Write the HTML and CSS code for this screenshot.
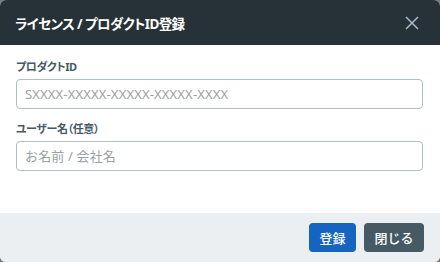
FILE: index.html
```html
<!DOCTYPE html>
<html lang="ja">
<head>
<meta charset="utf-8">
<link rel="stylesheet" href="styles.css">
</head>
<body>
<div class="dialog">
  <div class="header">
    <div class="title">ライセンス / プロダクトID登録</div>
    <button class="close" aria-label="閉じる">
      <svg width="14" height="14" viewBox="0 0 14 14"><path d="M1 1L13 13M13 1L1 13" stroke="#a9bcc8" stroke-width="1.5" fill="none"/></svg>
    </button>
  </div>
  <div class="body">
    <div class="field">
      <label class="label">プロダクトID</label>
      <input class="input" placeholder="SXXXX-XXXXX-XXXXX-XXXXX-XXXX">
    </div>
    <div class="field">
      <label class="label">ユーザー名（任意）</label>
      <input class="input" placeholder="お名前 / 会社名">
    </div>
  </div>
  <div class="footer">
    <button class="btn primary">登録</button>
    <button class="btn secondary">閉じる</button>
  </div>
</div>
</body>
</html>
```

FILE: styles.css
```css
html, body {
  margin: 0;
  padding: 0;
  background: #777a7c;
}
body {
  font-family: "Noto Sans", "Noto Sans CJK JP", sans-serif;
}
.dialog {
  width: 440px;
  height: 262px;
  border-radius: 6px;
  overflow: hidden;
  background: #ffffff;
  display: flex;
  flex-direction: column;
}
.header {
  height: 45px;
  background: #263238;
  display: flex;
  align-items: center;
  justify-content: space-between;
  padding: 0 16px 0 15px;
  box-sizing: border-box;
}
.title {
  color: #ffffff;
  font-size: 13.5px;
  font-weight: 700;
  font-feature-settings: "palt";
  letter-spacing: -0.6px;
}
.close {
  background: none;
  border: 0;
  padding: 0;
  width: 14px;
  height: 14px;
  margin-top: 1px;
  margin-right: 5px;
  display: flex;
}
.body {
  padding: 14px 17px 30px 16px;
  flex: 1;
}
.field {
  display: flex;
  flex-direction: column;
  margin-bottom: 12px;
}
.label {
  font-size: 11px;
  line-height: 16px;
  font-weight: 700;
  color: #455a64;
  margin-bottom: 4px;
  font-feature-settings: "palt";
  letter-spacing: -0.4px;
}
.input {
  height: 30px;
  box-sizing: border-box;
  border: 1px solid #b0bec5;
  border-radius: 4px;
  padding: 0 8px;
  font-family: inherit;
  font-size: 13px;
  letter-spacing: 0.15px;
  color: #333;
  outline: none;
}
.input::placeholder {
  color: #9a9fa3;
}
.footer {
  height: 49px;
  background: #eceff1;
  display: flex;
  justify-content: flex-end;
  align-items: center;
  gap: 8px;
  padding: 0 16px 0 0;
  box-sizing: border-box;
}
.btn {
  height: 29px;
  border: 0;
  border-radius: 4px;
  color: #ffffff;
  font-family: inherit;
  font-size: 13px;
  font-weight: 500;
  padding: 0;
}
.primary {
  background: #1565c0;
  width: 47px;
}
.secondary {
  background: #455a64;
  width: 60px;
}
```
